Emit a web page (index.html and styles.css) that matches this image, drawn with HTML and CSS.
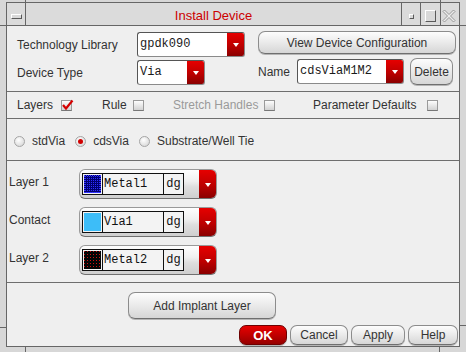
FILE: index.html
```html
<!DOCTYPE html>
<html lang="en">
<head>
    <meta charset="UTF-8">
    <meta name="viewport" content="width=device-width, initial-scale=1.0">
    <title>Install Device</title>
    <link rel="stylesheet" href="styles.css">
</head>
<body>
    <div class="frame">
        <div class="titlebar">
            <div class="tb-btn tb-menu"><span class="raised menu-bar"></span></div>
            <div class="title">Install Device</div>
            <div class="tb-btn tb-mini"><span class="raised mini-box"></span></div>
            <div class="tb-btn tb-max"><span class="raised max-box"></span></div>
            <div class="tb-btn tb-close">
                <svg width="14" height="14" viewBox="0 0 14 14">
                    <path d="M1 2.5 L2.5 1 L7 5.5 L11.5 1 L13 2.5 L8.5 7 L13 11.5 L11.5 13 L7 8.5 L2.5 13 L1 11.5 L5.5 7 Z" fill="#ececec" stroke="#8e8e8e" stroke-width="0.9"/>
                </svg>
            </div>
        </div>

        <div class="dialog">
            <div class="top">
                <div class="top-left">
                    <div class="field">
                        <span class="top-label">Technology Library</span>
                        <div class="combo combo-lib"><span class="combo-text">gpdk090</span><span class="arrow"></span></div>
                    </div>
                    <div class="field">
                        <span class="top-label">Device Type</span>
                        <div class="combo combo-type"><span class="combo-text">Via</span><span class="arrow"></span></div>
                    </div>
                </div>
                <div class="top-right">
                    <button class="btn btn-config">View Device Configuration</button>
                    <div class="field name-field">
                        <span class="name-label">Name</span>
                        <div class="combo combo-name"><span class="combo-text">cdsViaM1M2</span><span class="arrow"></span></div>
                        <button class="btn btn-delete">Delete</button>
                    </div>
                </div>
            </div>

            <div class="sep sep-top"></div>

            <div class="checks">
                <div class="check-item item-layers">
                    <span>Layers</span>
                    <span class="checkbox checked">
                        <svg width="13" height="13" viewBox="0 0 13 13">
                            <path d="M2 6 L5 9.5 L11.5 1.5" fill="none" stroke="#d40000" stroke-width="2.2"/>
                        </svg>
                    </span>
                </div>
                <div class="check-item item-rule">
                    <span>Rule</span>
                    <span class="checkbox"></span>
                </div>
                <div class="check-item item-stretch disabled">
                    <span>Stretch Handles</span>
                    <span class="checkbox"></span>
                </div>
                <div class="check-item item-params">
                    <span>Parameter Defaults</span>
                    <span class="checkbox"></span>
                </div>
            </div>

            <div class="sep"></div>

            <div class="radios">
                <span class="radio"></span><span class="radio-label">stdVia</span>
                <span class="radio on"></span><span class="radio-label">cdsVia</span>
                <span class="radio"></span><span class="radio-label">Substrate/Well Tie</span>
            </div>

            <div class="sep"></div>

            <div class="layers">
                <div class="layer-row">
                    <span class="layer-label">Layer 1</span>
                    <div class="layer-combo">
                        <div class="layer-box">
                            <span class="swatch"><span class="swatch-fill metal1"></span></span>
                            <span class="layer-name">Metal1</span>
                            <span class="layer-purpose">dg</span>
                        </div>
                        <span class="arrow layer-arrow"></span>
                    </div>
                </div>
                <div class="layer-row">
                    <span class="layer-label">Contact</span>
                    <div class="layer-combo">
                        <div class="layer-box">
                            <span class="swatch"><span class="swatch-fill via1"></span></span>
                            <span class="layer-name">Via1</span>
                            <span class="layer-purpose">dg</span>
                        </div>
                        <span class="arrow layer-arrow"></span>
                    </div>
                </div>
                <div class="layer-row">
                    <span class="layer-label">Layer 2</span>
                    <div class="layer-combo">
                        <div class="layer-box">
                            <span class="swatch"><span class="swatch-fill metal2"></span></span>
                            <span class="layer-name">Metal2</span>
                            <span class="layer-purpose">dg</span>
                        </div>
                        <span class="arrow layer-arrow"></span>
                    </div>
                </div>
            </div>

            <div class="sep"></div>

            <div class="implant">
                <button class="btn btn-implant">Add Implant Layer</button>
            </div>

            <div class="actions">
                <button class="btn btn-ok">OK</button>
                <button class="btn btn-cancel">Cancel</button>
                <button class="btn btn-apply">Apply</button>
                <button class="btn btn-help">Help</button>
            </div>
        </div>
    </div>
</body>
</html>
```

FILE: styles.css
```css
* {
    box-sizing: border-box;
}
body {
    margin: 0;
    font-family: "Liberation Sans", Arial, sans-serif;
    font-size: 12px;
    color: #333;
}

/* window frame, with the little resize ticks */
.frame {
    width: 466px;
    height: 352px;
    padding: 2px 6px 0;
    background:
        linear-gradient(#666, #666) 25px 0 / 1px 2px no-repeat,
        linear-gradient(#666, #666) 440px 0 / 1px 2px no-repeat,
        linear-gradient(#666, #666) 0 25px / 6px 1px no-repeat,
        linear-gradient(#666, #666) 460px 25px / 6px 1px no-repeat,
        linear-gradient(#666, #666) 0 327px / 6px 1px no-repeat,
        linear-gradient(#666, #666) 460px 325px / 6px 1px no-repeat,
        linear-gradient(#666, #666) 25px 347px / 1px 5px no-repeat,
        linear-gradient(#666, #666) 439px 347px / 1px 5px no-repeat,
        #d7d7d7;
}
.titlebar {
    display: flex;
    height: 24px;
    border: 1px solid #666;
    background: #dbdbdb;
}
.tb-btn {
    display: flex;
    align-items: flex-start;
}
.raised {
    display: block;
    border: 1px solid;
    border-color: #fff #5a5a5a #5a5a5a #fff;
    background: #d9d9d9;
}
.tb-menu {
    width: 19px;
    border-right: 1px solid #666;
    padding: 11px 0 0 4px;
}
.menu-bar {
    width: 11px;
    height: 5px;
}
.title {
    flex: 1;
    text-align: center;
    color: #cc0000;
    font-size: 13px;
    line-height: 22px;
    padding-top: 2px;
}
.tb-mini {
    width: 19px;
    border-left: 1px solid #666;
    padding: 11px 0 0 7px;
}
.mini-box {
    width: 5px;
    height: 5px;
}
.tb-max {
    width: 20px;
    border-left: 1px solid #666;
    padding: 7px 0 0 4px;
}
.max-box {
    width: 11px;
    height: 12px;
}
.tb-close {
    width: 19px;
    border-left: 1px solid #666;
    padding: 6px 0 0 1px;
}

/* dialog body */
.dialog {
    height: 321px;
    border: 1px solid #666;
    border-top: 0;
    background: #efefef;
    display: flex;
    flex-direction: column;
}
.sep {
    flex: none;
    height: 1px;
    background: #6e6e6e;
}
.sep-top {
    margin-top: 5px;
}

.top {
    display: flex;
    height: 60px;
    padding: 5px 0 0 10px;
}
.top-left {
    width: 228px;
    padding-top: 1px;
    display: flex;
    flex-direction: column;
    gap: 3px;
}
.field {
    display: flex;
    align-items: center;
}
.top-label {
    width: 120px;
}
.top-right {
    margin-left: 13px;
    display: flex;
    flex-direction: column;
}
.name-field {
    margin-top: 4px;
}
.name-label {
    width: 39px;
}

.combo {
    display: flex;
    height: 25px;
    border: 1px solid;
    border-color: #555 #8a8a8a #8a8a8a #555;
    border-radius: 3px;
    background: #fff;
    overflow: hidden;
}
.combo-lib {
    width: 108px;
}
.combo-type {
    width: 68px;
}
.combo-name {
    width: 107px;
}
.combo-text {
    flex: 1;
    padding-left: 2px;
    font-family: "Liberation Mono", "Courier New", monospace;
    font-size: 12px;
    line-height: 23px;
    color: #1a1a1a;
}
.arrow {
    width: 17px;
    flex: none;
    display: flex;
    align-items: center;
    justify-content: center;
    background: linear-gradient(#e60000, #bd0000 55%, #8a0000);
}
.arrow::after {
    content: "";
    border-left: 3.5px solid transparent;
    border-right: 3.5px solid transparent;
    border-top: 4px solid #fff;
    margin-top: 1px;
}

.btn {
    padding: 0;
    font-family: "Liberation Sans", Arial, sans-serif;
    font-size: 12px;
    color: #333;
    border: 1px solid #8c8c8c;
    border-bottom-color: #6f6f6f;
    border-radius: 7px;
    background: linear-gradient(#fdfdfd, #ececec 45%, #d6d6d6);
    box-shadow: 0 1px 0 #b5b5b5;
}
.btn-config {
    width: 198px;
    height: 23px;
}
.btn-delete {
    width: 43px;
    height: 27px;
    margin-left: 6px;
}

/* checkbox row */
.checks {
    height: 26px;
    display: flex;
    align-items: center;
    padding-left: 10px;
}
.check-item {
    display: flex;
    align-items: center;
}
.item-layers {
    width: 85px;
}
.item-rule {
    width: 71px;
}
.item-stretch {
    width: 140px;
}
.disabled {
    color: #9a9a9a;
}
.checkbox {
    position: relative;
    width: 11px;
    height: 11px;
    border: 1px solid #9a9a9a;
    border-bottom-color: #777;
    background: linear-gradient(#fdfdfd, #d2d2d2);
}
.item-layers .checkbox {
    margin-left: 8px;
}
.item-rule .checkbox,
.item-stretch .checkbox {
    margin-left: 6px;
}
.item-params .checkbox {
    margin-left: 11px;
}
.checkbox svg {
    position: absolute;
    left: -1px;
    top: -2px;
}

/* radio row */
.radios {
    height: 41px;
    display: flex;
    align-items: center;
    padding: 3px 0 0 7px;
}
.radio {
    width: 11px;
    height: 11px;
    border-radius: 50%;
    border: 1px solid #a5a5a5;
    background: radial-gradient(circle at 40% 35%, #fff, #d0d0d0);
    margin-right: 7px;
    display: flex;
    align-items: center;
    justify-content: center;
}
.radio.on::after {
    content: "";
    width: 5px;
    height: 5px;
    border-radius: 50%;
    background: #d00000;
}
.radio-label {
    margin-right: 10px;
}

/* layer rows */
.layers {
    height: 121px;
    padding: 8px 0 0 2px;
    display: flex;
    flex-direction: column;
    gap: 8px;
}
.layer-row {
    height: 30px;
    display: flex;
    align-items: center;
}
.layer-label {
    width: 70px;
    margin-top: -4px;
}
.layer-combo {
    width: 138px;
    height: 30px;
    display: flex;
    align-items: center;
    padding-left: 2px;
    border: 1px solid #999;
    border-bottom-color: #707070;
    border-radius: 6px;
    overflow: hidden;
    background: linear-gradient(#fefefe, #f0f0f0 40%, #dedede 60%, #cfcfcf);
}
.layer-box {
    display: flex;
    height: 22px;
    border: 1px solid #111;
    background: #f3f3f3;
}
.swatch {
    width: 20px;
    padding: 1px;
    border-right: 1px solid #111;
    display: flex;
}
.swatch-fill {
    flex: 1;
}
.metal1 {
    border: 1px dotted #3a3aff;
    background: conic-gradient(at 1px 1px, transparent 75%, #2d2dff 0) 0 0 / 2px 2px, #00006e;
}
.via1 {
    background: #3dbdf8;
}
.metal2 {
    background: conic-gradient(at 1px 1px, transparent 75%, #d01010 0) 0 0 / 3px 3px, #050505;
}
.layer-name {
    width: 61px;
    border-right: 1px solid #111;
    padding-left: 1px;
    font-family: "Liberation Mono", "Courier New", monospace;
    font-size: 12px;
    line-height: 20px;
    color: #111;
}
.layer-purpose {
    width: 19px;
    text-align: center;
    font-family: "Liberation Mono", "Courier New", monospace;
    font-size: 12px;
    line-height: 20px;
    color: #111;
}
.layer-arrow {
    margin-left: auto;
    height: 100%;
}

/* bottom buttons */
.implant {
    padding: 9px 0 0 121px;
}
.btn-implant {
    width: 148px;
    height: 27px;
}
.actions {
    display: flex;
    justify-content: flex-end;
    gap: 3px;
    margin-top: 6px;
    padding-right: 1px;
}
.actions .btn {
    height: 20px;
}
.btn-ok {
    width: 48px;
    color: #fff;
    font-weight: bold;
    font-size: 13px;
    border-color: #6d0000;
    background: linear-gradient(#e80000, #c00000 50%, #960000);
}
.btn-cancel {
    width: 58px;
}
.btn-apply {
    width: 54px;
}
.btn-help {
    width: 50px;
}
```
